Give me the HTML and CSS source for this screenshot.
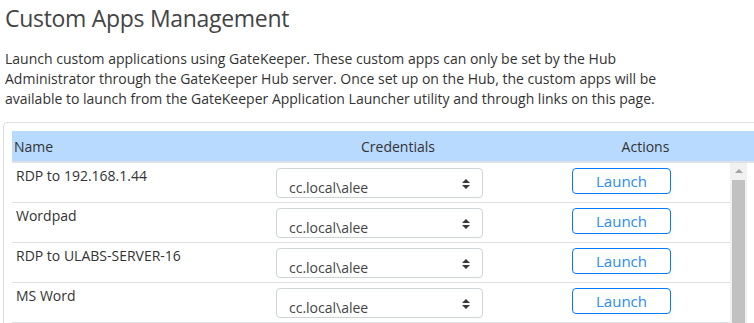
FILE: index.html
```html
<!DOCTYPE html>
<html lang="en">
<head>
  <meta charset="UTF-8">
  <title>Custom Apps Management</title>
  <meta name="viewport" content="width=device-width, initial-scale=1">
  <link rel="stylesheet" href="styles.css">
</head>
<body>
  <h1 class="page-title">Custom Apps Management</h1>
  <p class="intro">
    Launch custom applications using GateKeeper. These custom apps can only be set by the Hub<br>
    Administrator through the GateKeeper Hub server. Once set up on the Hub, the custom apps will be<br>
    available to launch from the GateKeeper Application Launcher utility and through links on this page.
  </p>

  <div class="card">
    <div class="table-head">
      <div class="th">Name</div>
      <div class="th center">Credentials</div>
      <div class="th center">Actions</div>
    </div>

    <div class="table-body">
      <div class="rows">
        <div class="row">
          <div class="name">RDP to 192.168.1.44</div>
          <div class="cred">
            <div class="select">cc.local\alee
              <svg class="caret" width="8" height="10" viewBox="0 0 8 10"><path d="M4 0L8 4H0z M4 10L0 6H8z" fill="#343a40"/></svg>
            </div>
          </div>
          <div class="action"><button class="btn-launch">Launch</button></div>
        </div>
        <div class="row">
          <div class="name">Wordpad</div>
          <div class="cred">
            <div class="select">cc.local\alee
              <svg class="caret" width="8" height="10" viewBox="0 0 8 10"><path d="M4 0L8 4H0z M4 10L0 6H8z" fill="#343a40"/></svg>
            </div>
          </div>
          <div class="action"><button class="btn-launch">Launch</button></div>
        </div>
        <div class="row">
          <div class="name">RDP to ULABS-SERVER-16</div>
          <div class="cred">
            <div class="select">cc.local\alee
              <svg class="caret" width="8" height="10" viewBox="0 0 8 10"><path d="M4 0L8 4H0z M4 10L0 6H8z" fill="#343a40"/></svg>
            </div>
          </div>
          <div class="action"><button class="btn-launch">Launch</button></div>
        </div>
        <div class="row">
          <div class="name">MS Word</div>
          <div class="cred">
            <div class="select">cc.local\alee
              <svg class="caret" width="8" height="10" viewBox="0 0 8 10"><path d="M4 0L8 4H0z M4 10L0 6H8z" fill="#343a40"/></svg>
            </div>
          </div>
          <div class="action"><button class="btn-launch">Launch</button></div>
        </div>
      </div>
      <div class="scrollbar">
        <div class="scroll-up"></div>
        <div class="scroll-thumb"></div>
      </div>
    </div>
  </div>
</body>
</html>
```

FILE: styles.css
```css
html {
  overflow: hidden;
}
body {
  font-family: 'Open Sans', 'Noto Sans', sans-serif;
  margin: 0;
  padding: 0 0 0 5px;
  background: #fff;
  color: #333;
  width: 760px;
  height: 323px;
  overflow: hidden;
}
.page-title {
  font-size: 23px;
  letter-spacing: -0.3px;
  font-weight: 400;
  color: #444;
  margin: 0;
  padding-top: 2px;
  line-height: 32px;
}
.intro {
  font-size: 14px;
  line-height: 20px;
  margin: 15px 0 0;
  white-space: nowrap;
}
.card {
  margin: 13px 0 0 -2px;
  width: 752px;
  border: 1px solid #dedede;
  border-radius: 4px;
  padding: 8px 8px 0;
}
.table-head {
  display: grid;
  grid-template-columns: 257px 258px 1fr;
  background: #b8daff;
  height: 30px;
  border-bottom: 2px solid #dee2e6;
  font-size: 14px;
  color: #333;
}
.th {
  display: flex;
  align-items: center;
  padding-left: 2px;
}
.th.center {
  justify-content: center;
  padding-left: 0;
}
.table-body {
  display: flex;
  height: 200px;
}
.rows {
  width: 718px;
}
.row {
  display: grid;
  grid-template-columns: 252px 249px 217px;
  height: 40px;
  border-bottom: 1px solid #dee2e6;
  box-sizing: border-box;
  font-size: 14px;
}
.name {
  padding: 3px 0 0 4px;
  line-height: 20px;
}
.cred {
  padding: 5px 0 0 12px;
}
.select {
  position: relative;
  width: 207px;
  height: 30px;
  box-sizing: border-box;
  border: 1px solid #ced4da;
  border-radius: 4px;
  padding: 9px 0 0 12px;
  line-height: 20px;
  font-size: 14px;
  color: #444;
}
.caret {
  position: absolute;
  right: 12px;
  top: 10px;
}
.action {
  display: flex;
  justify-content: center;
  align-items: flex-start;
  padding-top: 5px;
}
.btn-launch {
  width: 99px;
  height: 26px;
  background: #fff;
  border: 1px solid #007bff;
  border-radius: 4px;
  color: #2a8bf5;
  font-family: inherit;
  font-size: 15px;
  padding: 0;
  cursor: pointer;
}
.scrollbar {
  width: 17px;
  background: #f1f1f1;
  display: flex;
  flex-direction: column;
  align-items: center;
}
.scroll-up {
  width: 0;
  height: 0;
  border-left: 4px solid transparent;
  border-right: 4px solid transparent;
  border-bottom: 4px solid #a3a3a3;
  margin: 6px 0 7px;
}
.scroll-thumb {
  width: 13px;
  flex: 1;
  background: #c1c1c1;
}
```
